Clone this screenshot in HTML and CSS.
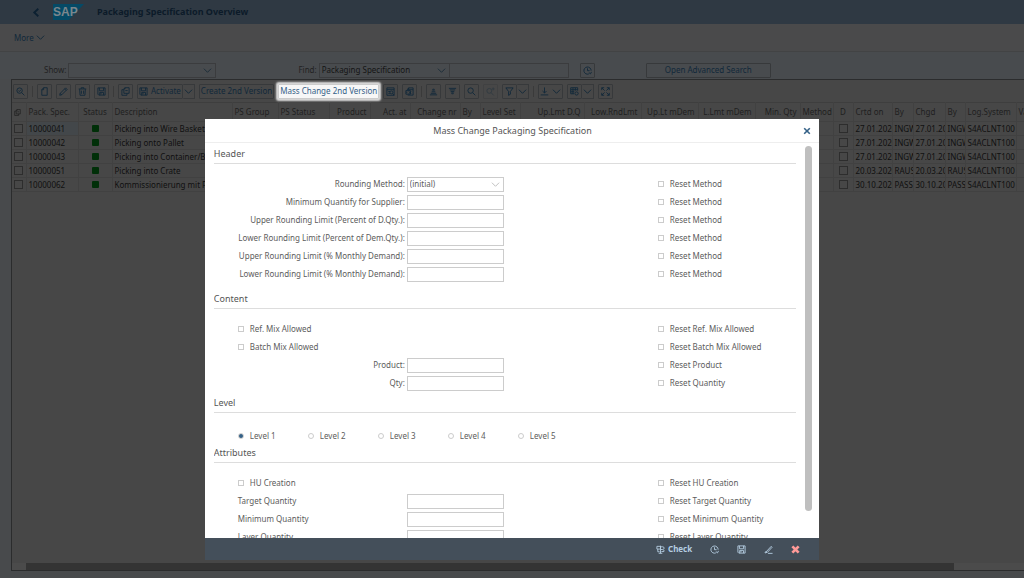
FILE: index.html
```html
<!DOCTYPE html>
<html lang="en">
<head>
<meta charset="utf-8">
<title>Packaging Specification Overview</title>
<link rel="stylesheet" href="styles.css">
</head>
<body>
<svg class="sprite" aria-hidden="true">
  <symbol id="zoom" viewBox="0 0 10 10"><circle cx="4" cy="4" r="3"/><path d="M6.3 6.3 9.3 9.3M2.8 4l1 1 1.5-1.8"/></symbol>
  <symbol id="page" viewBox="0 0 10 10"><path d="M4 .8h4v8.4H2V3zM4 .8V3H2"/></symbol>
  <symbol id="pencil" viewBox="0 0 10 10"><path d="M.8 9.2 1.4 7 7.3 1l1.7 1.7L3 8.7zM6.2 2.1l1.700 1.700M1.400 7 3 8.700"/></symbol>
  <symbol id="trash" viewBox="0 0 10 10"><path d="M.8 2.2h8.4M3.5 2V.8h3V2M1.8 2.4l.5 6.8h5.4l.5-6.8M3.8 4v3.6M6.2 4v3.6"/></symbol>
  <symbol id="save" viewBox="0 0 10 10"><path d="M1 1h8v8H2L1 8zM2.7 1v3.2h4.6V1M3 9V6h4.2v3M4.4 6.6v1.6"/></symbol>
  <symbol id="copy" viewBox="0 0 10 10"><path d="M4.5.8H9V7H3.2V2zM4.5.8V2H3.2M3 3H1v6.2h5.6V7M4.8 4h2.6"/></symbol>
  <symbol id="sheets" viewBox="0 0 10 10"><path d="M1 1h8v8.2H1zM1 3h8M2.5 5h2M2.5 7h2"/><circle cx="6" cy="6" r="1.6"/><path d="m7.2 7.2 1.800 2"/></symbol>
  <symbol id="pagex" viewBox="0 0 10 10"><path d="M4 3V1h5v8H3M4 1 2.5 3H9M1 4h5v4H1zM4.4 5l2.4 2.4M6.8 5 4.4 7.4M2 5.2v1.6"/></symbol>
  <symbol id="asc" viewBox="0 0 10 10"><path d="M5 2 3.8 3.5h2.4zM3 5.3h4M2 7h6M1 8.7h8"/></symbol>
  <symbol id="desc" viewBox="0 0 10 10"><path d="M1 1.500h8M2 3.200h6M3 4.900h4M3.800 6.500h2.400L5 8z"/></symbol>
  <symbol id="search" viewBox="0 0 10 10"><circle cx="4" cy="4" r="3"/><path d="m6.2 6.2 3 3"/></symbol>
  <symbol id="searchplus" viewBox="0 0 10 10"><circle cx="3.7" cy="4.3" r="2.7"/><path d="m5.7 6.3 2.800 3M8 .6v3M6.500 2.100h3"/></symbol>
  <symbol id="filter" viewBox="0 0 10 10"><path d="M1 1h8L6 5v3L4 9.3V5z"/></symbol>
  <symbol id="download" viewBox="0 0 10 10"><path d="M5 .5v6M2.8 4.5 5 6.7l2.2-2.2M.8 8.8h8.4"/></symbol>
  <symbol id="grid" viewBox="0 0 10 10"><path d="M4.500 7.500H.8V.8h7.700V4M.8 3h7.700M.8 5.300h4M3.300 1v6.500M6 1v3"/><circle cx="7.300" cy="7.200" r="1.800"/></symbol>
  <symbol id="expand" viewBox="0 0 10 10"><path d="M.8 3.500V.8h2.700M6.500.8h2.700v2.700M9.200 6.500v2.700H6.500M3.500 9.200H.8V6.500M1 1l3 3M9 1 6 4M9 9 6 6M1 9l3-3"/></symbol>
  <symbol id="clock" viewBox="0 0 10 10"><path d="M9 5.200A4 4 0 1 0 6.500 8.800M5 2.500V5.200h2.300M9.500 6.500l-1.200 2.200-1.800-1.400"/></symbol>
  <symbol id="down" viewBox="0 0 10 10"><path d="M1 3l4 4 4-4"/></symbol>
  <symbol id="left" viewBox="0 0 10 10"><path d="M7 .8 2.500 5 7 9.200"/></symbol>
  <symbol id="cross" viewBox="0 0 10 10"><path d="m1.500 1.500 7 7M8.500 1.500l-7 7"/></symbol>
  <symbol id="scales" viewBox="0 0 10 10"><path d="M5 .8v8.400M3 9.200h4M1 1.500h4v3H1zM2 4.500v3h2M5 2h2.500a1.500 1.500 0 0 1 0 3H5M6 7.300h2.800V5.500"/></symbol>
  <symbol id="edit" viewBox="0 0 10 10"><path d="M2 8 8 1.500 9 2.500 3.500 8.500zM4.500 9.300H9.500"/><circle cx="1.800" cy="8.200" r=".6"/></symbol>
</svg>
<header class="shell">
  <button class="back" aria-label="Back"><svg class="icon"><use href="#left"/></svg></button>
  <svg class="logo" viewBox="0 0 31 16" role="img" aria-label="SAP"><path class="logo-shape" d="M0 0h31L16 16H0z"/><text x="0" y="12" class="logo-text">SAP</text></svg>
  <h1>Packaging Specification Overview</h1>
</header>
<nav class="menu"><button class="more">More <svg class="icon"><use href="#down"/></svg></button></nav>
<form class="find">
  <label for="show">Show:</label>
  <span class="pick show"><select id="show"><option></option></select><svg class="icon"><use href="#down"/></svg></span>
  <label class="find-label" for="by">Find:</label>
  <span class="pick by"><select id="by"><option>Packaging Specification</option></select><svg class="icon"><use href="#down"/></svg></span>
  <input class="term" aria-label="Search term">
  <button type="button" class="tool history" aria-label="History"><svg class="icon"><use href="#clock"/></svg></button>
  <button type="button" class="tool advanced">Open Advanced Search</button>
</form>
<main class="panel">
  <div class="toolbar">
    <button class="tool" aria-label="Details"><svg class="icon"><use href="#zoom"/></svg></button>
    <i class="sep"></i>
    <button class="tool" aria-label="New"><svg class="icon"><use href="#page"/></svg></button>
    <button class="tool" aria-label="Edit"><svg class="icon"><use href="#pencil"/></svg></button>
    <button class="tool" aria-label="Delete"><svg class="icon"><use href="#trash"/></svg></button>
    <button class="tool" aria-label="Save"><svg class="icon"><use href="#save"/></svg></button>
    <i class="sep"></i>
    <button class="tool" aria-label="Copy"><svg class="icon"><use href="#copy"/></svg></button>
    <span class="split"><button class="tool wide"><svg class="icon"><use href="#save"/></svg>Activate</button><button class="tool drop" aria-label="Activate options"><svg class="icon"><use href="#down"/></svg></button></span>
    <button class="tool wide">Create 2nd Version</button>
    <button class="tool wide spot">Mass Change 2nd Version</button>
    <button class="tool" aria-label="Display"><svg class="icon"><use href="#sheets"/></svg></button>
    <button class="tool" aria-label="Remove"><svg class="icon"><use href="#pagex"/></svg></button>
    <i class="sep"></i>
    <button class="tool" aria-label="Sort ascending"><svg class="icon"><use href="#asc"/></svg></button>
    <button class="tool" aria-label="Sort descending"><svg class="icon"><use href="#desc"/></svg></button>
    <button class="tool" aria-label="Find"><svg class="icon"><use href="#search"/></svg></button>
    <button class="tool faint" aria-label="Find next"><svg class="icon"><use href="#searchplus"/></svg></button>
    <span class="split"><button class="tool" aria-label="Filter"><svg class="icon"><use href="#filter"/></svg></button><button class="tool drop" aria-label="Filter options"><svg class="icon"><use href="#down"/></svg></button></span>
    <i class="sep"></i>
    <button class="tool wide" aria-label="Export"><svg class="icon"><use href="#download"/></svg><svg class="icon"><use href="#down"/></svg></button>
    <span class="split"><button class="tool" aria-label="Layout"><svg class="icon"><use href="#grid"/></svg></button><button class="tool drop" aria-label="Layout options"><svg class="icon"><use href="#down"/></svg></button></span>
    <button class="tool" aria-label="Full screen"><svg class="icon"><use href="#expand"/></svg></button>
  </div>
  <div class="grid-wrap">
  <table class="grid">
    <colgroup><col class="w14"><col class="w52"><col class="w34"><col class="w120"><col class="w46"><col class="w51"><col class="w41"><col class="w40"><col class="w50"><col class="w20"><col class="w40"><col class="w64"><col class="w57"><col class="w57"><col class="w57"><col class="w45"><col class="w33"><col class="w20"><col class="w39"><col class="w21"><col class="w32"><col class="w20"><col class="w51"><col class="w40"></colgroup>
    <thead><tr><th><svg class="icon"><use href="#copy"/></svg></th><th>Pack. Spec.</th><th class="mid">Status</th><th>Description</th><th>PS Group</th><th>PS Status</th><th class="end">Product</th><th class="end">Act. at</th><th class="end">Change nr</th><th>By</th><th>Level Set</th><th class="end">Up.Lmt D.Q</th><th class="end">Low.RndLmt</th><th class="end">Up.Lt mDem</th><th class="end">L.Lmt mDem</th><th class="end">Min. Qty</th><th>Method</th><th class="mid">D</th><th>Crtd on</th><th>By</th><th>Chgd</th><th>By</th><th>Log.System</th><th>Valid</th></tr></thead>
    <tbody>
    <tr><td><input type="checkbox" aria-label="Select 10000041"></td><td class="current">10000041</td><td class="mid"><i class="led"></i></td><td>Picking into Wire Basket T</td><td></td><td></td><td></td><td></td><td></td><td></td><td></td><td></td><td></td><td></td><td></td><td></td><td></td><td class="mid"><input type="checkbox" aria-label="D"></td><td>27.01.2020</td><td>INGW</td><td>27.01.20</td><td>INGW</td><td>S4ACLNT100</td><td></td></tr>
    <tr><td><input type="checkbox" aria-label="Select 10000042"></td><td>10000042</td><td class="mid"><i class="led"></i></td><td>Picking onto Pallet</td><td></td><td></td><td></td><td></td><td></td><td></td><td></td><td></td><td></td><td></td><td></td><td></td><td></td><td class="mid"><input type="checkbox" aria-label="D"></td><td>27.01.2020</td><td>INGW</td><td>27.01.20</td><td>INGW</td><td>S4ACLNT100</td><td></td></tr>
    <tr><td><input type="checkbox" aria-label="Select 10000043"></td><td>10000043</td><td class="mid"><i class="led"></i></td><td>Picking into Container/Box</td><td></td><td></td><td></td><td></td><td></td><td></td><td></td><td></td><td></td><td></td><td></td><td></td><td></td><td class="mid"><input type="checkbox" aria-label="D"></td><td>27.01.2020</td><td>INGW</td><td>27.01.20</td><td>INGW</td><td>S4ACLNT100</td><td></td></tr>
    <tr><td><input type="checkbox" aria-label="Select 10000051"></td><td>10000051</td><td class="mid"><i class="led"></i></td><td>Picking into Crate</td><td></td><td></td><td></td><td></td><td></td><td></td><td></td><td></td><td></td><td></td><td></td><td></td><td></td><td class="mid"><input type="checkbox" aria-label="D"></td><td>20.03.2020</td><td>RAUS</td><td>20.03.20</td><td>RAUS</td><td>S4ACLNT100</td><td></td></tr>
    <tr><td><input type="checkbox" aria-label="Select 10000062"></td><td>10000062</td><td class="mid"><i class="led"></i></td><td>Kommissionierung mit Pick</td><td></td><td></td><td></td><td></td><td></td><td></td><td></td><td></td><td></td><td></td><td></td><td></td><td></td><td class="mid"><input type="checkbox" aria-label="D"></td><td>30.10.2020</td><td>PASS</td><td>30.10.20</td><td>PASS</td><td>S4ACLNT100</td><td></td></tr>
    </tbody>
  </table>
  </div>
  <div class="hbar"><i></i></div>
</main>
<section class="dialog" role="dialog" aria-labelledby="dialog-title">
  <div class="dialog-head"><h2 id="dialog-title">Mass Change Packaging Specification</h2><button class="close" aria-label="Close"><svg class="icon"><use href="#cross"/></svg></button></div>
  <div class="dialog-main">
    <form class="fields">
      <h3>Header</h3>
      <div class="rows spaced">
        <div class="row"><label class="name" for="f1">Rounding Method:</label><span class="pick field"><select id="f1"><option>(initial)</option></select><svg class="icon"><use href="#down"/></svg></span><label class="reset"><input type="checkbox">Reset Method</label></div>
        <div class="row"><label class="name" for="f2">Minimum Quantify for Supplier:</label><input class="field" id="f2"><label class="reset"><input type="checkbox">Reset Method</label></div>
        <div class="row"><label class="name" for="f3">Upper Rounding Limit (Percent of D.Qty.):</label><input class="field" id="f3"><label class="reset"><input type="checkbox">Reset Method</label></div>
        <div class="row"><label class="name" for="f4">Lower Rounding Limit (Percent of Dem.Qty.):</label><input class="field" id="f4"><label class="reset"><input type="checkbox">Reset Method</label></div>
        <div class="row"><label class="name" for="f5">Upper Rounding Limit (% Monthly Demand):</label><input class="field" id="f5"><label class="reset"><input type="checkbox">Reset Method</label></div>
        <div class="row"><label class="name" for="f6">Lower Rounding Limit (% Monthly Demand):</label><input class="field" id="f6"><label class="reset"><input type="checkbox">Reset Method</label></div>
      </div>
      <h3>Content</h3>
      <div class="rows">
        <div class="row"><label class="tick"><input type="checkbox">Ref. Mix Allowed</label><label class="reset"><input type="checkbox">Reset Ref. Mix Allowed</label></div>
        <div class="row"><label class="tick"><input type="checkbox">Batch Mix Allowed</label><label class="reset"><input type="checkbox">Reset Batch Mix Allowed</label></div>
        <div class="row"><label class="name" for="f7">Product:</label><input class="field" id="f7"><label class="reset"><input type="checkbox">Reset Product</label></div>
        <div class="row"><label class="name" for="f8">Qty:</label><input class="field" id="f8"><label class="reset"><input type="checkbox">Reset Quantity</label></div>
      </div>
      <h3>Level</h3>
      <div class="levels">
        <label><input type="radio" name="level" checked>Level 1</label><label><input type="radio" name="level">Level 2</label><label><input type="radio" name="level">Level 3</label><label><input type="radio" name="level">Level 4</label><label><input type="radio" name="level">Level 5</label>
      </div>
      <h3>Attributes</h3>
      <div class="rows">
        <div class="row"><label class="tick"><input type="checkbox">HU Creation</label><label class="reset"><input type="checkbox">Reset HU Creation</label></div>
        <div class="row"><label class="tick" for="f9">Target Quantity</label><input class="field" id="f9"><label class="reset"><input type="checkbox">Reset Target Quantity</label></div>
        <div class="row"><label class="tick" for="f10">Minimum Quantity</label><input class="field" id="f10"><label class="reset"><input type="checkbox">Reset Minimum Quantity</label></div>
        <div class="row"><label class="tick" for="f11">Layer Quantity</label><input class="field" id="f11"><label class="reset"><input type="checkbox">Reset Layer Quantity</label></div>
      </div>
    </form>
    <div class="vbar"><i></i></div>
  </div>
  <footer class="dialog-foot">
    <button class="check"><svg class="icon"><use href="#scales"/></svg>Check</button>
    <button aria-label="History"><svg class="icon"><use href="#clock"/></svg></button>
    <button aria-label="Save"><svg class="icon"><use href="#save"/></svg></button>
    <button aria-label="Edit"><svg class="icon"><use href="#edit"/></svg></button>
    <button class="cancel" aria-label="Cancel"><svg class="icon"><use href="#cross"/></svg></button>
  </footer>
</section>
</body>
</html>
```
FILE: styles.css
```css
* { box-sizing: border-box; }
body {
  margin: 0; height: 100vh; overflow: hidden; position: relative;
  display: flex; flex-direction: column;
  background: #484a4c; color: #151515;
  font: 8px/12px "Noto Sans", "Open Sans", sans-serif;
}
h1, h2, h3 { margin: 0; font-weight: normal; }
button, input, select {
  margin: 0; padding: 0; border: 0; background: none; color: inherit; font: inherit; appearance: none;
}
.sprite { position: absolute; width: 0; height: 0; }
.icon { width: 9px; height: 9px; flex: none; fill: none; stroke: currentColor; stroke-width: 1; }

.shell { height: 24px; flex: none; display: flex; align-items: center; background: #2f3943; padding-left: 30px; }
.back { width: 12px; height: 12px; margin-right: 11px; color: #0c2031; display: grid; place-items: center; }
.back .icon { stroke-width: 2; }
.logo { width: 31px; height: 16px; margin-right: 13px; }
.logo-shape { fill: #054a66; }
.logo-text { font: bold 12px "Liberation Sans", Arial, sans-serif; fill: #7b868c; }
.shell h1 { font-size: 9px; font-weight: bold; color: #0c1b29; }

.menu { height: 28px; flex: none; display: flex; align-items: center; padding-left: 14px; background: #4a4a4b; border-bottom: 1px solid #424344; }
.more { display: flex; align-items: center; gap: 2px; color: #11283a; }

.find { height: 27px; flex: none; display: flex; align-items: center; padding: 9px 0 0 44px; background: #484b4e; }
.find > label { color: #222; }
.pick { display: flex; align-items: center; position: relative; height: 15px; border: 1px solid #3b3c3e; }
.pick select { width: 100%; padding-left: 2px; }
.pick .icon { position: absolute; right: 3px; pointer-events: none; color: #1b2b39; }
.show { width: 148px; margin-left: 2px; }
.find-label { margin-left: 82px; }
.by { width: 131px; margin-left: 2px; }
.term { width: 119px; height: 15px; border: 1px solid #3b3c3e; border-left: 0; }
.history { margin-left: 11px; }
.advanced { width: 125px; margin-left: 51px; }

.panel { flex: 1; min-height: 0; display: flex; flex-direction: column; margin: 0 0 7px 11px; border: 1px solid #2b2c2d; border-right: 0; background: #474747; }
.toolbar { height: 22px; flex: none; display: flex; align-items: center; gap: 4px; padding-left: 1px; }
.tool { height: 15px; min-width: 15px; border: 1px solid #37393b; border-radius: 1px; color: #11283a; display: flex; align-items: center; justify-content: center; gap: 3px; white-space: nowrap; }
.wide { padding: 0 1px; }
.drop { border-left: 0; min-width: 12px; }
.split { display: flex; }
.faint { opacity: .4; }
.sep { width: 1px; height: 11px; background: #3a3a3a; }
.spot { position: relative; z-index: 3; background: #f7f7f7; color: #346187; border-color: #ccc; box-shadow: 0 0 2px 2px #ddd; }

.grid-wrap { flex: 1; min-height: 0; overflow: hidden; }
.grid { table-layout: fixed; width: 1044px; border-collapse: collapse; }
.grid th, .grid td { height: 14px; padding: 0 2px; border-right: 1px solid #414141; border-bottom: 1px solid #414141; text-align: left; font-weight: normal; line-height: 12px; white-space: nowrap; overflow: hidden; color: #101010; }
.grid th { height: 19px; border-top: 1px solid #3e3e3e; color: #1f1f1f; }
.grid th .icon { width: 7px; height: 7px; display: block; }
.grid .mid { text-align: center; }
.grid .end { text-align: right; padding-right: 3px; }
.grid .current { background: #43474a; }
.grid input { display: block; width: 9px; height: 9px; border: 1px solid #2d2d2d; }
.grid .mid input { margin: 0 auto; }
.led { display: block; width: 7px; height: 7px; margin: 0 auto; background: #002f08; border-radius: 1px; }
.w14 { width: 14px; } .w20 { width: 20px; } .w21 { width: 21px; } .w32 { width: 32px; } .w33 { width: 33px; } .w34 { width: 34px; }
.w39 { width: 39px; } .w40 { width: 40px; } .w41 { width: 41px; } .w45 { width: 45px; } .w46 { width: 46px; }
.w50 { width: 50px; } .w51 { width: 51px; } .w52 { width: 52px; } .w57 { width: 57px; } .w64 { width: 64px; } .w120 { width: 120px; }
.hbar { height: 7px; flex: none; background: #4b4b4b; padding-left: 14px; }
.hbar i { display: block; width: 93%; height: 7px; background: #343434; }

.dialog { position: absolute; z-index: 4; left: 20%; right: 20%; top: 119px; bottom: 18px; display: flex; flex-direction: column; background: #fff; color: #5c5c5c; }
.dialog-head { height: 24px; flex: none; display: flex; align-items: center; border-bottom: 1px solid #eee; padding: 0 8px 0 17px; }
.dialog-head h2 { flex: 1; text-align: center; font-size: 9px; color: #555; }
.close { color: #346187; display: grid; place-items: center; }
.close .icon { width: 8px; height: 8px; stroke-width: 2; }
.dialog-main { flex: 1; min-height: 0; display: flex; justify-content: space-between; padding: 0 7px 0 9px; }
.fields { width: 582px; overflow: hidden; }
.fields h3 { height: 17px; margin-top: 4px; font-size: 9px; line-height: 14px; color: #555; border-bottom: 1px solid #ddd; }
.rows { padding-top: 11px; }
.spaced { padding-bottom: 5px; }
.row { display: grid; grid-template-columns: 191px 249px 1fr; align-items: center; height: 18px; column-gap: 2px; }
.tick { padding-left: 24px; }
.reset { grid-column: 3; }
.row label, .levels label { display: flex; align-items: center; }
.row .name { justify-content: flex-end; }
.field { width: 97px; height: 15px; border: 1px solid #ccc; background: #fff; }
.field .icon { color: #bbb; }
.row label input { width: 6px; height: 6px; margin-right: 6px; border: 1px solid #ccc; }
.levels { display: flex; padding: 17px 0 0 24px; }
.levels label { width: 70px; }
.levels input { width: 6px; height: 6px; margin-right: 6px; border: 1px solid #ccc; border-radius: 50%; }
.levels input:checked { background: radial-gradient(#346187 2px, #fff 3px); }
.vbar { width: 7px; padding-top: 3px; }
.vbar i { display: block; height: 93%; background: #bfbfbf; border-radius: 4px; }
.dialog-foot { height: 22px; flex: none; display: flex; align-items: center; justify-content: flex-end; gap: 18px; padding-right: 19px; background: #444f5a; color: #b5cee2; }
.dialog-foot button { display: flex; align-items: center; gap: 3px; }
.dialog-foot .check { font-weight: bold; }
.cancel { color: #ff9a98; }
.cancel .icon { stroke-width: 3; }
```
